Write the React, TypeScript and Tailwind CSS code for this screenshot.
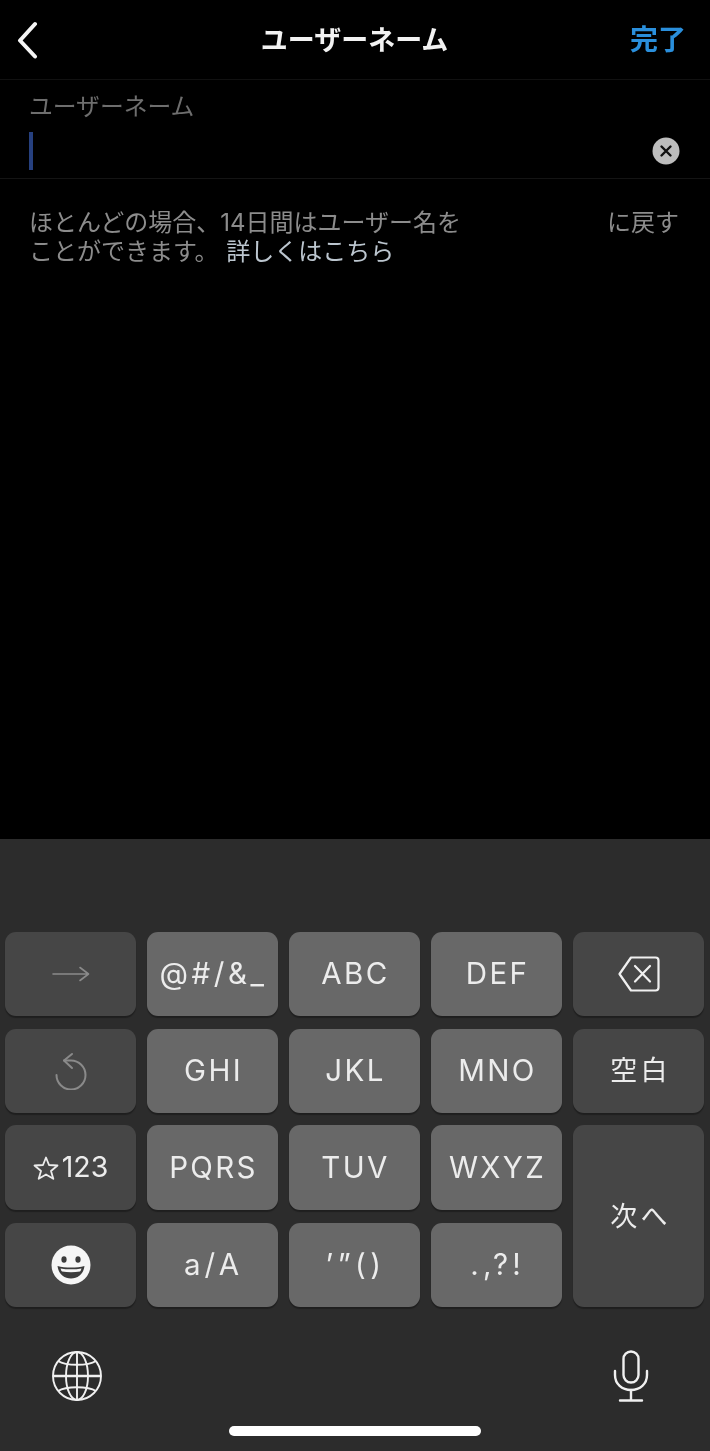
const jp = "font-['Inter','Noto_Sans_CJK_JP',sans-serif]";

function BackIcon() {
  return (
    <svg width="22" height="38" viewBox="0 0 22 38" fill="none" stroke="#f5f5f5" strokeWidth="4" strokeLinecap="round" strokeLinejoin="round">
      <path d="M19 3 L4 19.5 L19 35.5" />
    </svg>
  );
}

function ClearIcon() {
  return (
    <svg width="28" height="28" viewBox="0 0 28 28">
      <circle cx="14" cy="14" r="13.5" fill="#bdbdbd" />
      <path d="M9.5 9.5 L18.5 18.5 M18.5 9.5 L9.5 18.5" stroke="#111" strokeWidth="2.4" strokeLinecap="round" />
    </svg>
  );
}

function ArrowIcon() {
  return (
    <svg width="38" height="16" viewBox="0 0 38 16" fill="none" stroke="#8a8a8a" strokeWidth="1.6" strokeLinecap="round" strokeLinejoin="round">
      <path d="M1 8 H36.5 M28 1.5 L36.5 8 L28 14.5" />
    </svg>
  );
}

function UndoIcon() {
  return (
    <svg width="32" height="38" viewBox="0 0 32 38" fill="none" stroke="#8a8a8a" strokeWidth="2" strokeLinecap="round" strokeLinejoin="round">
      <path d="M9 8.5 H16 A14.5 14.5 0 1 1 1.5 23" />
      <path d="M17 2 L9 8.5 L17 16" />
    </svg>
  );
}

function DeleteIcon() {
  return (
    <svg width="42" height="36" viewBox="0 0 42 36" fill="none" stroke="#f0f0f0" strokeWidth="2.2" strokeLinecap="round" strokeLinejoin="round">
      <path d="M13 1.5 H37.5 C39.5 1.5 40.5 2.5 40.5 4.5 V31.5 C40.5 33.5 39.5 34.5 37.5 34.5 H13 L1.5 18 Z" />
      <path d="M17 10 L32 25.5 M32 10 L17 25.5" />
    </svg>
  );
}

function StarIcon() {
  return (
    <svg width="26" height="24" viewBox="0 0 26 24" fill="none" stroke="#ececec" strokeWidth="1.8" strokeLinejoin="round">
      <path d="M13 1.5 L16 9 L24.5 9.5 L18 15 L20.3 22.8 L13 18.4 L5.7 22.8 L8 15 L1.5 9.5 L10 9 Z" />
    </svg>
  );
}

function SmileIcon() {
  return (
    <svg width="40" height="40" viewBox="0 0 40 40">
      <circle cx="20" cy="20" r="19.5" fill="#f6f6f6" />
      <ellipse cx="13" cy="14.5" rx="2.6" ry="3.2" fill="#3c3c3c" />
      <ellipse cx="27" cy="14.5" rx="2.6" ry="3.2" fill="#3c3c3c" />
      <path d="M6.5 21 C14 23 26 23 33.5 21 C32.5 29 27 33.5 20 33.5 C13 33.5 7.5 29 6.5 21 Z" fill="#3c3c3c" />
      <path d="M9.5 23.4 C16 24.6 24 24.6 30.5 23.4 C30 25 29.6 25.8 29 26.6 C23 27.6 17 27.6 11 26.6 C10.4 25.8 10 25 9.5 23.4 Z" fill="#f6f6f6" />
    </svg>
  );
}

function GlobeIcon() {
  return (
    <svg width="50" height="50" viewBox="0 0 50 50" fill="none" stroke="#f0f0f0" strokeWidth="1.9">
      <circle cx="25" cy="25" r="24" />
      <ellipse cx="25" cy="25" rx="11" ry="24" />
      <path d="M25 1 V49" />
      <path d="M1 25 H49" strokeWidth="2.4" />
      <path d="M6 10 C14 15 36 15 44 10 M6 40 C14 35 36 35 44 40" />
    </svg>
  );
}

function MicIcon() {
  return (
    <svg width="36" height="52" viewBox="0 0 36 52" fill="none" stroke="#f0f0f0" strokeWidth="2.4" strokeLinecap="round">
      <rect x="10.5" y="1.5" width="15" height="31" rx="7.5" />
      <path d="M2 21 V25 C2 34 9 40 18 40 C27 40 34 34 34 25 V21" />
      <path d="M18 40 V50 M7 50.5 H29" />
    </svg>
  );
}

const keyBase = "flex items-center justify-center rounded-[11px] shadow-[0_2px_1px_rgba(0,0,0,0.3)] text-[#ececec]";
const light = `${keyBase} bg-[#686868]`;
const dark = `${keyBase} bg-[#464646]`;
const label = "pl-[2px] text-[29.5px] tracking-[0.08em] leading-none";

export default function App() {
  return (
    <div className={`flex h-[1451px] w-[710px] flex-col overflow-hidden bg-black blur-[0.5px] ${jp}`}>
      <header className="grid h-[80px] grid-cols-[1fr_auto_1fr] items-center border-b border-[#111111] pl-[16px] pr-[24px]">
        <BackIcon />
        <h1 className="ml-[7px] pt-[3px] text-[27px] font-bold text-[#f2f2f2]">ユーザーネーム</h1>
        <span className="justify-self-end text-[28px] font-bold text-[#2a8fdc]">完了</span>
      </header>

      <div className="flex h-[99px] flex-col border-b border-[#141414] pl-[30px] pr-[30px]">
        <label className="ml-[-1px] mt-[12px] text-[23.8px] leading-[30px] text-[#6e6e6e]">ユーザーネーム</label>
        <div className="mt-[10px] flex items-center justify-between">
          <div className="ml-[-1px] h-[38px] w-[4px] bg-[#26407f]" />
          <ClearIcon />
        </div>
      </div>

      <div className="flex-1 pl-[29px] pr-[31px] pt-[29px] text-[24px] leading-[29px] text-[#8c8c8c]">
        <div className="flex justify-between">
          <span>ほとんどの場合、14日間はユーザー名を</span>
          <span>に戻す</span>
        </div>
        <p>
          ことができます。 <span className="ml-[1px] text-[#bcc6cf]">詳しくはこちら</span>
        </p>
      </div>

      <div className="flex h-[612px] shrink-0 flex-col bg-[#2c2c2c] pb-[14px] pl-[5px] pr-[6px] pt-[93px]">
        <div className="grid grid-cols-[repeat(5,131px)] grid-rows-[84px_84px_85px_84px] gap-x-[11px] gap-y-[12.6px]">
          <div className={dark}><ArrowIcon /></div>
          <div className={`${light} ${label} tracking-[0.12em]`}>@#/&amp;_</div>
          <div className={`${light} ${label}`}>ABC</div>
          <div className={`${light} ${label}`}>DEF</div>
          <div className={dark}><DeleteIcon /></div>

          <div className={dark}><UndoIcon /></div>
          <div className={`${light} ${label}`}>GHI</div>
          <div className={`${light} ${label}`}>JKL</div>
          <div className={`${light} ${label}`}>MNO</div>
          <div className={`${dark} pl-[4px] pt-[2px] text-[27px] tracking-[0.12em]`}>空白</div>

          <div className={`${dark} gap-[3px] text-[28.5px] leading-none`}><StarIcon />123</div>
          <div className={`${light} ${label}`}>PQRS</div>
          <div className={`${light} ${label}`}>TUV</div>
          <div className={`${light} ${label}`}>WXYZ</div>
          <div className={`${dark} row-span-2 pl-[4px] pt-[2px] text-[27px] tracking-[0.12em]`}>次へ</div>

          <div className={dark}><SmileIcon /></div>
          <div className={`${light} ${label} tracking-[0.14em]`}>a/A</div>
          <div className={`${light} ${label} tracking-[0.15em]`}>’”()</div>
          <div className={`${light} ${label} tracking-[0.14em]`}>.,?!</div>
        </div>

        <div className="mt-[43px] flex items-center justify-between pl-[47px] pr-[55px]">
          <GlobeIcon />
          <MicIcon />
        </div>

        <div className="mt-[24px] h-[10px] w-[252px] self-center rounded-full bg-white" />
      </div>
    </div>
  );
}
